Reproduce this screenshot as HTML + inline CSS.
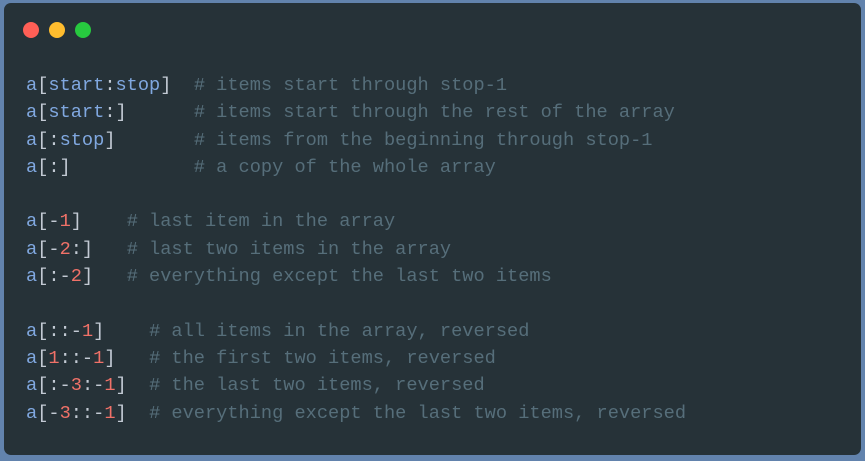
<!DOCTYPE html>
<html><head><style>
html,body{margin:0;padding:0;width:865px;height:461px;background:#6283ad;overflow:hidden}
.card{position:absolute;left:4px;top:3px;width:857px;height:452px;background:#263238;border-radius:7px}
.dot{position:absolute;top:19px;width:16px;height:16px;border-radius:50%}
pre{position:absolute;left:22px;top:69px;margin:0;font-family:"Liberation Mono",monospace;font-size:18.65px;line-height:27.3px;color:#c3cad4;white-space:pre}
.k{color:#80a8e0}.n{color:#f07168}.c{color:#566e7a}
</style></head><body>
<div class="card">
<div class="dot" style="left:19px;background:#ff5f56"></div>
<div class="dot" style="left:45px;background:#ffbd2e"></div>
<div class="dot" style="left:71px;background:#27c93f"></div>
<pre><span class="k">a</span>[<span class="k">start</span>:<span class="k">stop</span>]  <span class="c"># items start through stop-1</span>
<span class="k">a</span>[<span class="k">start</span>:]      <span class="c"># items start through the rest of the array</span>
<span class="k">a</span>[:<span class="k">stop</span>]       <span class="c"># items from the beginning through stop-1</span>
<span class="k">a</span>[:]           <span class="c"># a copy of the whole array</span>

<span class="k">a</span>[-<span class="n">1</span>]    <span class="c"># last item in the array</span>
<span class="k">a</span>[-<span class="n">2</span>:]   <span class="c"># last two items in the array</span>
<span class="k">a</span>[:-<span class="n">2</span>]   <span class="c"># everything except the last two items</span>

<span class="k">a</span>[::-<span class="n">1</span>]    <span class="c"># all items in the array, reversed</span>
<span class="k">a</span>[<span class="n">1</span>::-<span class="n">1</span>]   <span class="c"># the first two items, reversed</span>
<span class="k">a</span>[:-<span class="n">3</span>:-<span class="n">1</span>]  <span class="c"># the last two items, reversed</span>
<span class="k">a</span>[-<span class="n">3</span>::-<span class="n">1</span>]  <span class="c"># everything except the last two items, reversed</span></pre>
</div>
</body></html>
